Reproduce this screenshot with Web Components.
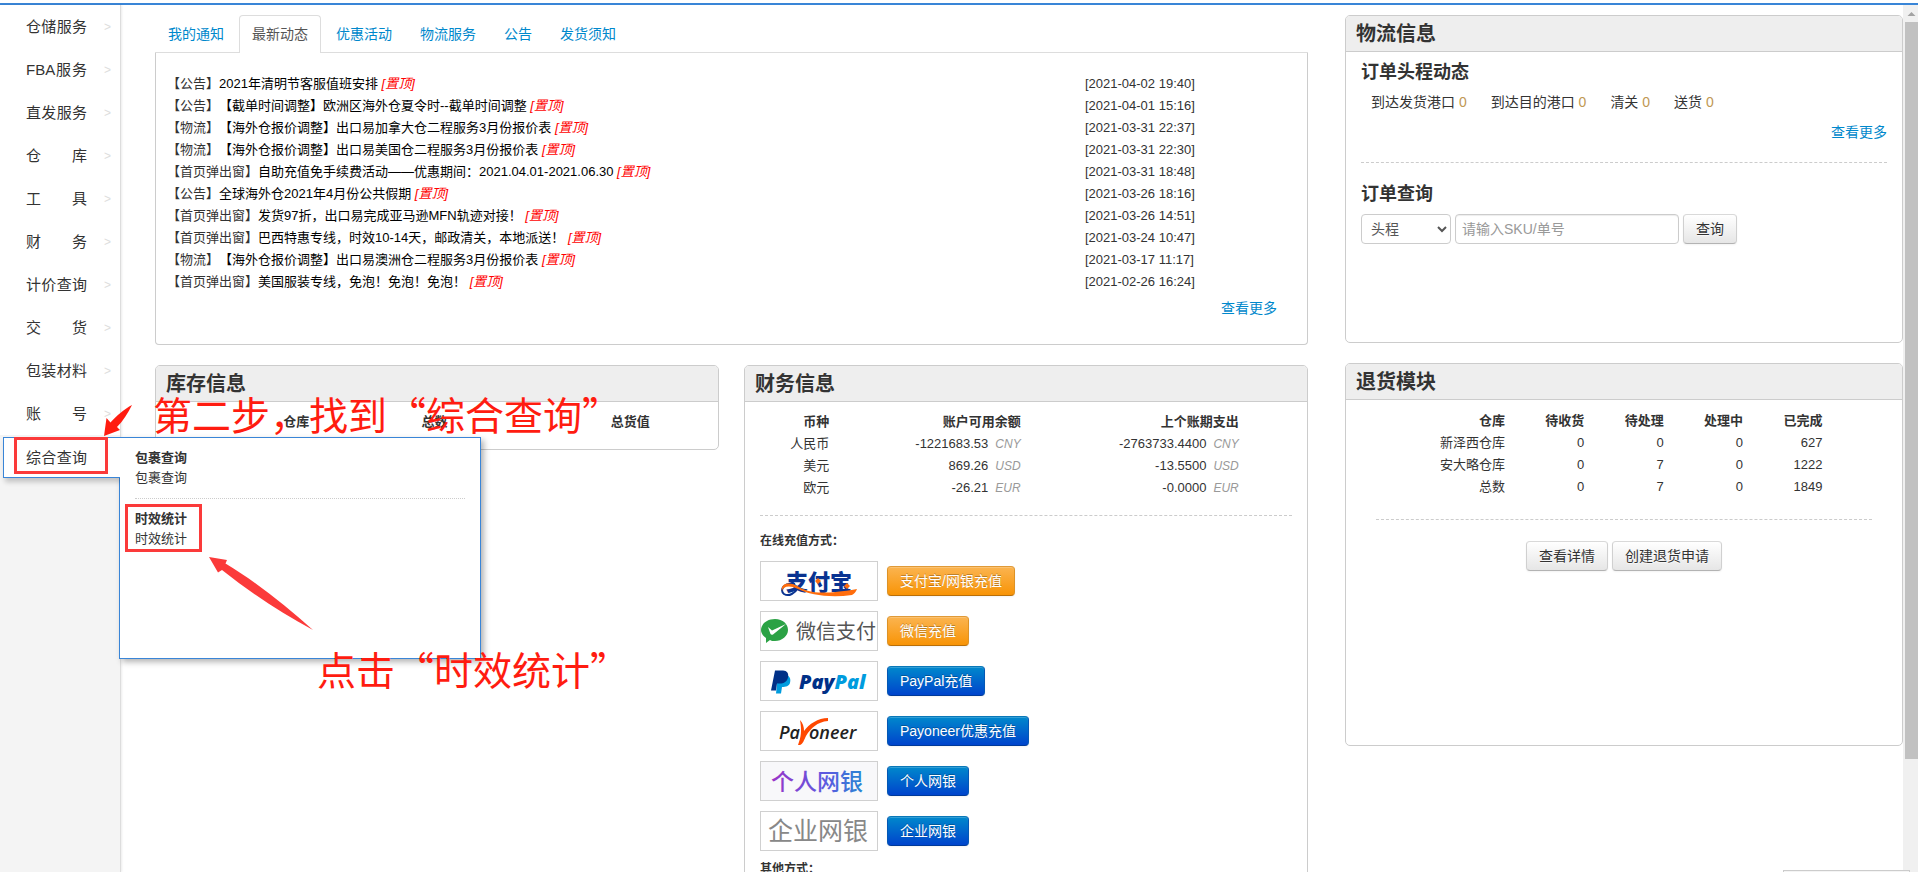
<!DOCTYPE html>
<html lang="zh-CN">
<head>
<meta charset="utf-8">
<title>会员中心</title>
<style>
  html, body { height: 100%; }
  body {
    margin: 0; overflow: hidden; background: #fff; color: #333;
    font: 13px/20px "Liberation Sans", "Noto Sans CJK SC", sans-serif;
    text-spacing-trim: space-all;
  }
</style>
</head>
<body>
<member-home></member-home>

<template id="member-home">
  <style>
    :host { display: flex; flex-direction: column; height: 100vh; position: relative; overflow: hidden; }
    .bar { flex: none; height: 2px; margin-top: 3px; background: #3985d7; }
    .body { flex: 1; display: flex; min-height: 0; }
    main {
      flex: 1; min-width: 0; padding: 10px 0 0 34px; overflow: hidden;
      display: grid; grid-template-columns: minmax(0, 1153fr) minmax(0, 558fr); column-gap: 37px; align-items: start;
    }
    .left, .right { display: grid; row-gap: 20px; }
    .pair { display: grid; grid-template-columns: minmax(0, 1fr) minmax(0, 1fr); gap: 25px; align-items: start; }
    .status { position: absolute; right: 8px; bottom: 0; width: 125px; height: 1px; border: 1px solid #ccc; border-bottom: 0; background: #f4f4f4; }
  </style>
  <div class="bar"></div>
  <div class="body">
    <side-menu></side-menu>
    <main>
      <div class="left">
        <news-tabs></news-tabs>
        <div class="pair">
          <stock-panel></stock-panel>
          <finance-panel></finance-panel>
        </div>
      </div>
      <div class="right">
        <shipping-panel></shipping-panel>
        <returns-panel></returns-panel>
      </div>
    </main>
    <page-scroll></page-scroll>
  </div>
  <div class="status"></div>
  <guide-marks></guide-marks>
</template>

<template id="side-menu">
  <style>
    :host { display: block; flex: none; width: 120px; background: #f4f4f4; border-right: 1px solid #ddd; box-shadow: 1px 0 2px rgba(0,0,0,.08); position: relative; }
    ul { list-style: none; margin: 0; padding: 0; }
    li { box-sizing: border-box; height: 43px; position: relative; background: #fff; }
    li > a {
      display: flex; align-items: center; justify-content: space-between; box-sizing: border-box; height: 43px;
      padding: 0 9px 0 26px; color: #333; text-decoration: none; font-size: 15px;
    }
    .name { display: block; width: 61px; text-align: justify; text-align-last: justify; white-space: nowrap; }
    .arrow { color: #ddd; font-size: 12px; }
    li.open { background: none; padding: 2px 0 0 3px; }
    li.open > a { height: 41px; padding-left: 22px; background: #fff; border: 1px solid #3985d7; border-right: 0; box-shadow: 2px 4px 5px rgba(0,0,0,.2); position: relative; z-index: 2; width: 117px; clip-path: inset(0 0 -12px -6px); }
    .flyout {
      position: absolute; left: 119px; top: 2px; z-index: 1; box-sizing: border-box; width: 362px; height: 222px;
      padding: 10px 15px; background: #fff; border: 1px solid #3985d7; box-shadow: 3px 3px 6px rgba(0,0,0,.3);
    }
    dl { margin: 0; }
    dl + dl { border-top: 1px dotted #ccc; margin-top: 10px; padding-top: 10px; }
    dt { font-weight: bold; }
    dd { margin: 0; }
    dd a { color: #333; text-decoration: none; }
  </style>
  <nav aria-label="主菜单"><ul></ul></nav>
</template>

<template id="news-tabs">
  <style>
    :host { display: block; }
    .tabs { display: flex; gap: 2px; border-bottom: 1px solid #ddd; }
    .tabs a { padding: 8px 12px; border: 1px solid transparent; border-bottom: 0; margin-bottom: -1px; color: #08c; text-decoration: none; font-size: 14px; border-radius: 4px 4px 0 0; }
    .tabs a.on { color: #555; background: #fff; border-color: #ddd; padding-bottom: 9px; }
    .pane { box-sizing: border-box; height: 292px; padding: 20px 30px 0 11px; border: 1px solid #ccc; border-top: 0; border-radius: 0 0 4px 4px; }
    ul { list-style: none; margin: 0; padding: 0; }
    li { display: grid; grid-template-columns: 82.7% 1fr; line-height: 22px; white-space: nowrap; }
    li a { color: #000; text-decoration: none; }
    em { color: #f00; }
    .more { margin-top: 5px; text-align: right; }
    .more a { color: #08c; font-size: 14px; text-decoration: none; }
  </style>
  <div class="tabs"></div>
  <div class="pane">
    <ul></ul>
    <div class="more"><a href="#">查看更多</a></div>
  </div>
</template>

<template id="info-card">
  <style>
    :host { display: block; box-sizing: border-box; border: 1px solid #ccc; border-radius: 5px; background: #fff; }
    h2 { margin: 0; padding: 0 10px; height: 35px; line-height: 36px; font-size: 20px; color: #333; background: #eee; border-bottom: 1px solid #ccc; border-radius: 4px 4px 0 0; }
  </style>
  <h2></h2>
  <slot></slot>
</template>

<template id="stock-panel">
  <style>
    :host { display: block; }
    info-card { height: 85px; }
    table { width: calc(100% - 30px); margin: 9px 15px 0; border-collapse: collapse; table-layout: fixed; line-height: 22px; }
    th { padding: 0; text-align: right; }
  </style>
  <info-card heading="库存信息">
    <table><thead><tr><th style="width:26%">仓库</th><th style="width:26%">总数</th><th style="width:38%">总货值</th><th></th></tr></thead></table>
  </info-card>
</template>

<template id="finance-panel">
  <style>
    :host { display: block; }
    info-card { height: 560px; }
    .in { padding: 9px 15px 0; }
    table { width: 100%; border-collapse: collapse; table-layout: fixed; line-height: 22px; }
    th, td { padding: 0; text-align: right; font-weight: normal; }
    thead th { font-weight: bold; }
    em { color: #999; font-size: 12px; margin-left: 7px; }
    hr { border: 0; border-top: 1px dashed #ccc; margin: 16px 0 15px; }
    h3 { margin: 0; font-size: 12px; line-height: 20px; }
    .pay { display: grid; gap: 10px; margin: 10px 0 8px; }
  </style>
  <info-card heading="财务信息">
    <div class="in">
      <table>
        <thead><tr><th style="width:13%">币种</th><th style="width:36%">账户可用余额</th><th style="width:41%">上个账期支出</th><th></th></tr></thead>
        <tbody>
          <tr><th>人民币</th><td>-1221683.53<em>CNY</em></td><td>-2763733.4400<em>CNY</em></td><td></td></tr>
          <tr><th>美元</th><td>869.26<em>USD</em></td><td>-13.5500<em>USD</em></td><td></td></tr>
          <tr><th>欧元</th><td>-26.21<em>EUR</em></td><td>-0.0000<em>EUR</em></td><td></td></tr>
        </tbody>
      </table>
      <hr>
      <h3>在线充值方式：</h3>
      <div class="pay">
        <pay-row label="支付宝/网银充值" tone="orange">
          <svg width="116" height="38" viewBox="1 1 116 38" aria-hidden="true">
            <text x="26" y="29" font-size="22" font-weight="900" fill="#0a3391">支付宝</text>
            <path d="M35 23C24 21 19 29 24 33c5 3 11-1 14-6" fill="none" stroke="#0a3391" stroke-width="2"/>
            <path d="M22 30c-2-8 8-10 17-4 10 6 22 8 58 2-1 3-3 5-5 6-22 3-42 0-54-6-8-4-15-3-16 2z" fill="#ff6d0d"/>
            <path d="M58 17l3 3-3 3-3-3zM87 22l3 3-3 3-3-3z" fill="#ff6d0d"/>
          </svg>
        </pay-row>
        <pay-row label="微信充值" tone="orange">
          <svg width="116" height="38" viewBox="1 1 116 38" aria-hidden="true">
            <path d="M15 8c8 0 13 5 13 11s-6 11-13 11c-2 0-4 0-5-1l-4 3 0-5C3 25 1 22 1 19 1 13 7 8 15 8z" fill="#2ba245"/>
            <path d="M8 16l4 3.500 14-6.500-13 10.500c-1 .7-2 .3-2.500-.5z" fill="#fff"/>
            <text x="36" y="28" font-size="20" fill="#555">微信支付</text>
          </svg>
        </pay-row>
        <pay-row label="PayPal充值" tone="blue">
          <svg width="116" height="38" viewBox="1 1 116 38" aria-hidden="true">
            <path d="M18 14h8c4 1 5 4 4 8-1 3-4 4-8 4l-1 6.500h-5z" fill="#009cde"/>
            <path d="M15 9.500h8c4 0 6 3 5 7-1 4-4 6-8 6h-3l-1 7h-5z" fill="#003087"/>
            <text x="39" y="28" font-size="20" font-weight="800" font-style="italic" font-family="Open Sans" fill="#003087">Pay<tspan fill="#009cde">Pal</tspan></text>
          </svg>
        </pay-row>
        <pay-row label="Payoneer优惠充值" tone="blue">
          <svg width="116" height="38" viewBox="1 1 116 38" aria-hidden="true">
            <g font-size="18" font-weight="600" font-style="italic" font-family="Open Sans" fill="#222">
              <text x="19" y="28">Pa</text><text x="49" y="28">oneer</text>
            </g>
            <path d="M40 9c3 3 4 7 4 11C49 13 58 7 68 7l0 3C57 11 51 17 46 25c-2 4-3 8-6 9l-2 0c3-8 4-14 2-25z" fill="#ff4800"/>
          </svg>
        </pay-row>
        <pay-row label="个人网银" tone="blue">
          <svg width="116" height="38" viewBox="1 1 116 38" aria-hidden="true">
            <defs><linearGradient id="g" gradientUnits="userSpaceOnUse" x1="12" y1="0" x2="104" y2="0"><stop offset="0" stop-color="#9a35c8"/><stop offset=".6" stop-color="#5a5be0"/><stop offset="1" stop-color="#2787d2"/></linearGradient></defs>
            <rect x="1" y="1" width="116" height="38" fill="#f8f8fa"/>
            <text x="11" y="29" font-size="23" font-weight="500" fill="url(#g)">个人网银</text>
          </svg>
        </pay-row>
        <pay-row label="企业网银" tone="blue">
          <svg width="116" height="38" viewBox="1 1 116 38" aria-hidden="true">
            <text x="8" y="29" font-size="25" fill="#888">企业网银</text>
          </svg>
        </pay-row>
      </div>
      <h3>其他方式：</h3>
    </div>
  </info-card>
</template>

<template id="ui-button">
  <style>
    :host { display: inline-block; }
    button {
      display: block; box-sizing: border-box; height: 30px; padding: 0 12px; font: 14px/20px "Liberation Sans", "Noto Sans CJK SC", sans-serif;
      color: #333; border: 1px solid #ccc; border-color: #d9d9d9 #d0d0d0 #b3b3b3; border-radius: 4px; white-space: nowrap;
      background: linear-gradient(#fff, #e6e6e6); box-shadow: inset 0 1px 0 rgba(255,255,255,.2), 0 1px 2px rgba(0,0,0,.05);
      text-shadow: 0 1px 1px rgba(255,255,255,.75);
    }
    :host([tone="orange"]) button { color: #fff; background: linear-gradient(#fbb450, #f89406); border-color: #e09a38 #dd9226 #b96f08; text-shadow: 0 -1px 0 rgba(0,0,0,.25); }
    :host([tone="blue"]) button { color: #fff; background: linear-gradient(#08c, #04c); border-color: #0a78b8 #0458b4 #003a99; text-shadow: 0 -1px 0 rgba(0,0,0,.25); }
  </style>
  <button type="button"><slot></slot></button>
</template>

<template id="pay-row">
  <style>
    :host { display: flex; align-items: center; gap: 9px; }
    .logo { box-sizing: border-box; width: 118px; height: 40px; border: 1px solid #d0d0d0; }
    ::slotted(svg) { display: block; }
  </style>
  <div class="logo"><slot></slot></div>
  <ui-button></ui-button>
</template>

<template id="shipping-panel">
  <style>
    :host { display: block; }
    info-card { height: 328px; }
    .in { padding: 10px 15px 0; }
    h3 { margin: 0; font-size: 18px; line-height: 20px; }
    .stats { display: flex; gap: 24px; margin: 10px 0 10px 10px; font-size: 14px; white-space: nowrap; }
    .stats b { font-weight: normal; color: #c09853; }
    .more { text-align: right; font-size: 14px; }
    .more a { color: #08c; text-decoration: none; }
    hr { border: 0; border-top: 1px dashed #ccc; margin: 20px 0 21px; }
    form { display: flex; gap: 4px; margin-top: 10px; }
    select, input { box-sizing: border-box; height: 30px; border: 1px solid #ccc; border-radius: 4px; background: #fff; color: #555; font: 14px/20px "Liberation Sans", "Noto Sans CJK SC", sans-serif; }
    select { width: 90px; padding: 4px 5px; }
    input { width: 224px; padding: 4px 6px; box-shadow: inset 0 1px 1px rgba(0,0,0,.075); }
    input::placeholder { color: #999; }
  </style>
  <info-card heading="物流信息">
    <div class="in">
      <h3>订单头程动态</h3>
      <div class="stats">
        <span>到达发货港口 <b>0</b></span><span>到达目的港口 <b>0</b></span><span>清关 <b>0</b></span><span>送货 <b>0</b></span>
      </div>
      <div class="more"><a href="#">查看更多</a></div>
      <hr>
      <h3>订单查询</h3>
      <form>
        <select aria-label="查询类型"><option>头程</option></select>
        <input type="text" aria-label="单号" placeholder="请输入SKU/单号">
        <ui-button>查询</ui-button>
      </form>
    </div>
  </info-card>
</template>

<template id="returns-panel">
  <style>
    :host { display: block; }
    info-card { height: 383px; }
    .in { padding: 10px 30px 0; }
    table { width: 100%; border-collapse: collapse; table-layout: fixed; line-height: 22px; }
    th, td { padding: 0; text-align: right; font-weight: normal; white-space: nowrap; }
    thead th { font-weight: bold; }
    hr { border: 0; border-top: 1px dashed #ccc; margin: 21px 0; }
    .acts { display: flex; justify-content: center; gap: 4px; }
  </style>
  <info-card heading="退货模块">
    <div class="in">
      <table>
        <thead><tr><th style="width:26%">仓库</th><th style="width:16%">待收货</th><th style="width:16%">待处理</th><th style="width:16%">处理中</th><th style="width:16%">已完成</th><th></th></tr></thead>
        <tbody>
          <tr><th>新泽西仓库</th><td>0</td><td>0</td><td>0</td><td>627</td><td></td></tr>
          <tr><th>安大略仓库</th><td>0</td><td>7</td><td>0</td><td>1222</td><td></td></tr>
          <tr><th>总数</th><td>0</td><td>7</td><td>0</td><td>1849</td><td></td></tr>
        </tbody>
      </table>
      <hr>
      <div class="acts"><ui-button>查看详情</ui-button><ui-button>创建退货申请</ui-button></div>
    </div>
  </info-card>
</template>

<template id="page-scroll">
  <style>
    :host { display: flex; flex-direction: column; flex: none; box-sizing: border-box; width: 15px; padding-left: 2px; background: #f0f0f0; }
    svg { display: block; flex: none; }
    .thumb { height: 85%; background: #c1c1c1; }
  </style>
  <svg width="13" height="17" viewBox="0 0 13 17" aria-hidden="true"><path d="M2.500 11h8L6.500 7z" fill="#a3a3a3"/></svg>
  <div class="thumb"></div>
</template>

<template id="guide-marks">
  <style>
    :host { display: block; position: absolute; inset: 0; z-index: 5; pointer-events: none; overflow: hidden; color: #ff1c10; font-family: "Noto Sans CJK SC", sans-serif; font-size: 39px; line-height: 50px; }
    svg { position: absolute; left: 0; top: 0; }
    p { position: absolute; margin: 0; white-space: nowrap; }
    .step { left: 153px; top: 388px; }
    .click { left: 317px; top: 643px; }
  </style>
  <svg width="500" height="700" aria-hidden="true">
    <g fill="none" stroke="#fb3a3a" stroke-width="3">
      <rect x="15.500" y="438.500" width="91" height="34"/>
      <rect x="126.500" y="505.500" width="74" height="45"/>
    </g>
    <path d="M104 436l2.500-18 4 4.500c6-7 14-13.500 21.500-17.500-4 8-9 16-15 22l3 3z" fill="#ff1c10"/>
    <path d="M209 557l18 3-1.500 3.500c30 18 60 42 87.500 66.500-32-17-62-37-91-60l-4 2.500z" fill="#fb3a3a"/>
  </svg>
  <p class="step">第二步，找到“综合查询”</p>
  <p class="click">点击“时效统计”</p>
</template>

<script>
  class Base extends HTMLElement {
    constructor() {
      super();
      this.attachShadow({ mode: 'open' }).append(document.getElementById(this.localName).content.cloneNode(true));
    }
    $(selector) { return this.shadowRoot.querySelector(selector); }
  }

  class InfoCard extends Base {
    connectedCallback() { this.$('h2').textContent = this.getAttribute('heading'); }
  }

  class PayRow extends Base {
    connectedCallback() {
      const button = this.$('ui-button');
      button.setAttribute('tone', this.getAttribute('tone'));
      button.textContent = this.getAttribute('label');
    }
  }

  class SideMenu extends Base {
    connectedCallback() {
      const names = ['仓储服务', 'FBA服务', '直发服务', '仓 库', '工 具', '财 务', '计价查询', '交 货', '包装材料', '账 号'];
      const item = name => `<li><a href="#"><span class="name">${name}</span><span class="arrow">&gt;</span></a></li>`;
      this.$('ul').innerHTML = names.map(item).join('') + `
        <li class="open"><a href="#"><span class="name">综合查询</span></a>
          <div class="flyout">
            <dl><dt>包裹查询</dt><dd><a href="#">包裹查询</a></dd></dl>
            <dl><dt>时效统计</dt><dd><a href="#">时效统计</a></dd></dl>
          </div>
        </li>`;
    }
  }

  class NewsTabs extends Base {
    connectedCallback() {
      const tabs = ['我的通知', '最新动态', '优惠活动', '物流服务', '公告', '发货须知'];
      const news = [
        ['公告', '2021年清明节客服值班安排', '2021-04-02 19:40'],
        ['公告', '【截单时间调整】欧洲区海外仓夏令时--截单时间调整', '2021-04-01 15:16'],
        ['物流', '【海外仓报价调整】出口易加拿大仓二程服务3月份报价表', '2021-03-31 22:37'],
        ['物流', '【海外仓报价调整】出口易美国仓二程服务3月份报价表', '2021-03-31 22:30'],
        ['首页弹出窗', '自助充值免手续费活动——优惠期间：2021.04.01-2021.06.30', '2021-03-31 18:48'],
        ['公告', '全球海外仓2021年4月份公共假期', '2021-03-26 18:16'],
        ['首页弹出窗', '发货97折，出口易完成亚马逊MFN轨迹对接！', '2021-03-26 14:51'],
        ['首页弹出窗', '巴西特惠专线，时效10-14天，邮政清关，本地派送！', '2021-03-24 10:47'],
        ['物流', '【海外仓报价调整】出口易澳洲仓二程服务3月份报价表', '2021-03-17 11:17'],
        ['首页弹出窗', '美国服装专线，免泡！免泡！免泡！', '2021-02-26 16:24'],
      ];
      this.$('.tabs').innerHTML = tabs.map((t, i) => `<a href="#"${i === 1 ? ' class="on"' : ''}>${t}</a>`).join('');
      this.$('ul').innerHTML = news.map(([kind, title, time]) =>
        `<li><span>【${kind}】<a href="#">${title}</a> <em>[置顶]</em></span><time>[${time}]</time></li>`).join('');
    }
  }

  customElements.define('ui-button', class extends Base {});
  customElements.define('info-card', InfoCard);
  customElements.define('pay-row', PayRow);
  customElements.define('side-menu', SideMenu);
  customElements.define('news-tabs', NewsTabs);
  for (const name of ['stock-panel', 'finance-panel', 'shipping-panel', 'returns-panel', 'page-scroll', 'guide-marks', 'member-home'])
    customElements.define(name, class extends Base {});
</script>
</body>
</html>
